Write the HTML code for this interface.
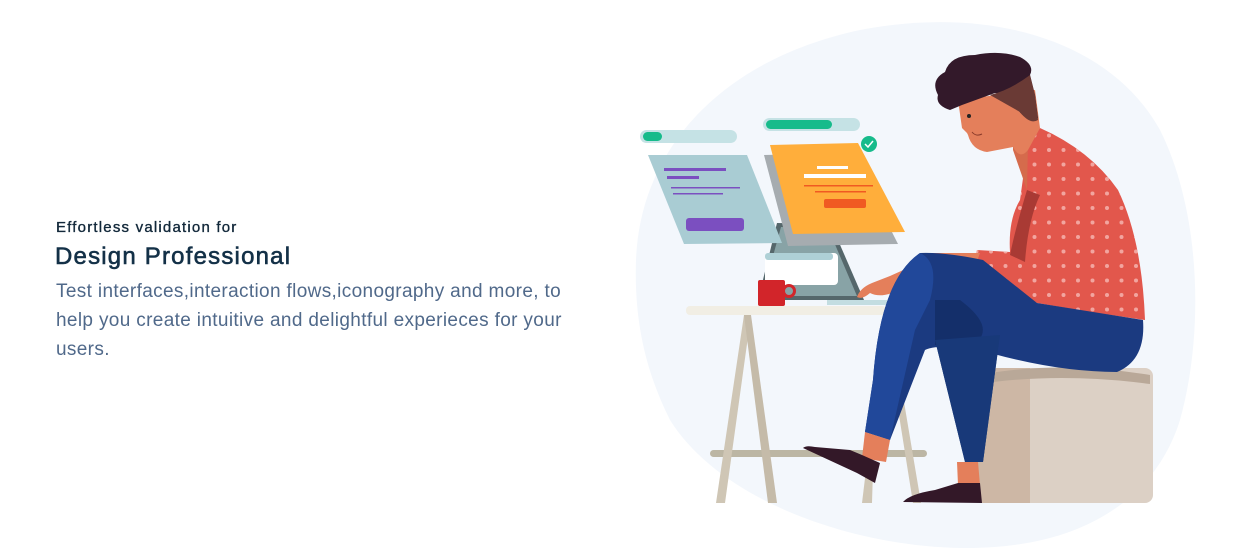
<!DOCTYPE html>
<html><head><meta charset="utf-8"><style>
html,body{margin:0;padding:0;background:#fff;width:1255px;height:557px;overflow:hidden;position:relative;font-family:"Liberation Sans",Arial,sans-serif}
.t1{position:absolute;left:56px;top:219px;font-size:15px;color:#12283a;letter-spacing:1.2px;-webkit-text-stroke:0.35px #12283a}
.t2{position:absolute;left:55px;top:243px;font-size:24px;color:#133047;letter-spacing:1.2px;-webkit-text-stroke:0.6px #133047}
.t3{position:absolute;left:56px;top:277px;width:525px;font-size:19px;letter-spacing:0.35px;line-height:29px;color:#50698a}
svg{position:absolute;left:0;top:0}
</style></head><body>
<svg width="1255" height="557" viewBox="0 0 1255 557">
<defs><pattern id="dots" width="14.5" height="14.5" patternUnits="userSpaceOnUse"><circle cx="5" cy="5" r="2" fill="#f2a59f"/></pattern></defs>
<path d="M636 260 C640 150 720 60 860 30 C990 5 1110 40 1160 130 C1200 210 1205 330 1180 420 C1155 500 1080 550 960 548 C850 546 720 500 670 420 C645 370 634 320 636 260Z" fill="#f3f7fc"/>
<rect x="640" y="130" width="97" height="13" rx="6.5" fill="#c5e2e5"/>
<rect x="643" y="132" width="19" height="9" rx="4.5" fill="#17bb8b"/>
<rect x="763" y="118" width="97" height="13" rx="6.5" fill="#c5e2e5"/>
<rect x="766" y="120" width="66" height="9" rx="4.5" fill="#17bb8b"/>
<polygon points="777,223 831,224 864,300 758,300" fill="#55676b"/>
<polygon points="781,227 828,228 857,296 762,296" fill="#88a3a6"/>
<rect x="765" y="253" width="73" height="32" rx="4" fill="#fff"/>
<rect x="765" y="253" width="68" height="7" rx="3" fill="#aed0d6"/>
<rect x="827" y="300" width="60" height="5" fill="#c3dde1"/>
<polygon points="648,155 747,155 782,243 684,244" fill="#a9ccd3"/>
<rect x="664" y="168" width="62" height="3" fill="#7b4fc0"/>
<rect x="667" y="176" width="32" height="3" fill="#7b4fc0"/>
<rect x="671" y="187" width="69" height="1.5" fill="#7b4fc0"/>
<rect x="673" y="193" width="50" height="1.5" fill="#7b4fc0"/>
<rect x="686" y="218" width="58" height="13" rx="3" fill="#7b4fc0"/>
<polygon points="764,155 852,153 898,244 788,246" fill="#a6acb0"/>
<polygon points="770,145 858,143 905,232 793,234" fill="#ffae3b"/>
<rect x="817" y="166" width="31" height="3" fill="#fff"/>
<rect x="804" y="174" width="62" height="4" fill="#fff"/>
<rect x="804" y="185" width="69" height="1.5" fill="#f05a22"/>
<rect x="815" y="191" width="51" height="1.5" fill="#f05a22"/>
<rect x="824" y="199" width="42" height="9" rx="2" fill="#f05a22"/>
<circle cx="869" cy="144" r="8" fill="#17bb8b"/>
<path d="M865 144 l3 3 l5 -6" stroke="#fff" stroke-width="1.5" fill="none"/>
<rect x="758" y="280" width="27" height="26" rx="2" fill="#d2252a"/>
<circle cx="789" cy="291" r="5.5" fill="none" stroke="#d2252a" stroke-width="3"/>
<rect x="710" y="450" width="217" height="7" rx="3.5" fill="#bcb6a4"/>
<polygon points="744,315 751,315 725,503 716,503" fill="#cfc6b5"/>
<polygon points="744,315 751,315 777,503 768,503" fill="#c5bba9"/>
<polygon points="895,390 902,390 921,503 913,503" fill="#cfc6b5"/>
<polygon points="866,470 873,470 872,503 862,503" fill="#cfc6b5"/>
<rect x="686" y="306" width="200" height="9" rx="4" fill="#f1eee4"/>
<rect x="975" y="368" width="178" height="135" rx="8" fill="#dcd0c5"/>
<path d="M975 376 Q975 368 983 368 L1030 368 L1030 503 L983 503 Q975 503 975 495Z" fill="#cdb7a5"/>
<path d="M978 375 Q1060 360 1150 375 L1150 384 Q1060 372 978 384Z" fill="#b9a898"/>
<path d="M935 340 L1000 335 L983 462 L965 462Z" fill="#183979"/>
<polygon points="957,462 978,462 980,485 958,485" fill="#e47f5b"/>
<path d="M903 502 Q910 494 935 490 L958 483 L980 483 L982 503Z" fill="#331828"/>
<path d="M857 297 Q860 288 872 283 L890 276 L930 258 L925 290 L895 292 Q880 298 870 293 Q862 300 857 297Z" fill="#e47f5b"/>
<path d="M1028 142 L1040 128 Q1090 150 1118 190 Q1142 240 1145 320 L1090 312 L1037 303 L973 267 L977 250 L1010 252 Q1008 220 1020 200Z" fill="#e2574c"/>
<path d="M1028 142 L1040 128 Q1090 150 1118 190 Q1142 240 1145 320 L1090 312 L1037 303 L973 267 L977 250 L1010 252 Q1008 220 1020 200Z" fill="url(#dots)"/>
<path d="M1027 190 Q1015 230 1010 255 L1025 262 Q1028 220 1040 195Z" fill="#a93a34"/>
<path d="M930 253 L980 253 L975 267 L925 262Z" fill="#e47f5b"/>
<path d="M920 253 Q945 252 983 260 L1037 303 L1143 320 Q1146 360 1117 372 Q1050 372 970 347 Q935 345 925 350 L890 440 L865 432 L873 380 Q880 280 920 253Z" fill="#1b3a80"/>
<path d="M873 380 Q880 280 920 253 Q940 262 930 300 L915 330 L890 440 L865 432Z" fill="#21489a"/>
<path d="M935 300 L960 300 Q1000 330 970 347 L935 345Z" fill="#142f6a"/>
<path d="M935 340 L1000 335 L983 462 L965 462Z" fill="#183979"/>
<polygon points="865,432 890,440 886,462 862,458" fill="#e47f5b"/>
<path d="M803 448 Q806 445 815 447 L850 450 L862 455 L880 463 L875 483 L857 473Z" fill="#331828"/>
<path d="M1013 147 L1040 128 L1028 142 L1027 190 Q1020 170 1013 150Z" fill="#d56b4c"/>
<path d="M958 100 L1035 90 L1040 128 L1028 150 Q1020 160 1013 147 L987 152 Q972 150 968 135 L967 133 L962 128 Z" fill="#e47f5b"/>
<path d="M938 95 Q930 80 945 72 Q950 55 975 55 Q1000 50 1020 57 Q1035 65 1030 75 L1035 95 L1038 118 Q1030 125 1018 110 Q1010 95 995 93 L962 105 L950 110 Q935 105 938 95Z" fill="#33192a"/>
<path d="M990 95 Q1010 90 1030 75 L1035 95 L1038 120 Q1030 125 1020 112 Z" fill="#6a3a35"/>
<circle cx="969" cy="116" r="2" fill="#222"/>
<path d="M972 132 Q976 137 982 134" stroke="#8a3a2a" stroke-width="1" fill="none"/>
</svg>
<div class="t1">Effortless validation for</div>
<div class="t2">Design Professional</div>
<div class="t3">Test interfaces,interaction flows,iconography and more, to help you create intuitive and delightful experieces for your users.</div>
</body></html>
